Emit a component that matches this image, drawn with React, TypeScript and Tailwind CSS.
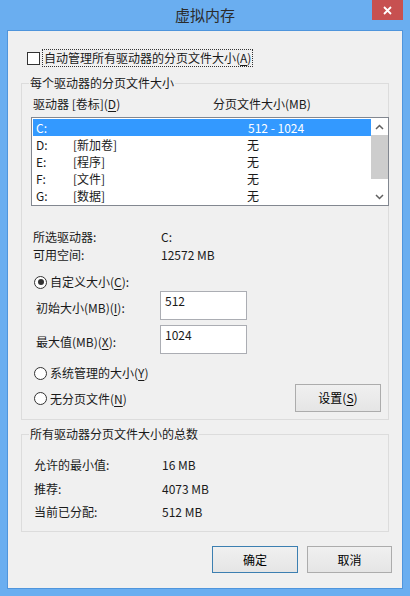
import React from "react";

const font = { fontFamily: '"Noto Sans CJK SC", "Noto Sans", sans-serif' };

const U = ({ c }: { c: string }) => <span className="underline underline-offset-2">{c}</span>;

const Radio = ({ checked }: { checked?: boolean }) => (
  <span className="flex h-[13px] w-[13px] shrink-0 items-center justify-center rounded-full border border-[#333] bg-white">
    {checked && <span className="h-[6px] w-[6px] rounded-full bg-[#333]" />}
  </span>
);

const Chevron = ({ up }: { up?: boolean }) => (
  <svg width="9" height="6" viewBox="0 0 9 6">
    <polyline
      points={up ? "1,5 4.5,1.5 8,5" : "1,1 4.5,4.5 8,1"}
      fill="none"
      stroke="#606060"
      strokeWidth="1.5"
    />
  </svg>
);

const Btn = ({ children, primary, className = "" }: { children: React.ReactNode; primary?: boolean; className?: string }) => (
  <button
    className={`flex items-center justify-center border bg-gradient-to-b from-[#f0f0f0] to-[#e5e5e5] text-[12px] text-black ${
      primary ? "border-[#3c7fb1]" : "border-[#acacac]"
    } ${className}`}
  >
    {children}
  </button>
);

const drives = [
  { d: "C:", label: "", size: "512 - 1024", selected: true },
  { d: "D:", label: "[新加卷]", size: "无" },
  { d: "E:", label: "[程序]", size: "无" },
  { d: "F:", label: "[文件]", size: "无" },
  { d: "G:", label: "[数据]", size: "无" },
];

export default function App() {
  return (
    <div className="h-[596px] w-[410px] bg-[#6aaef0] text-[12px] leading-[16px] text-[#1a1a1a]" style={font}>
      {/* title bar */}
      <div className="relative flex h-[30px] items-center justify-center">
        <span className="text-[15px] text-[#2b2b2b]">虚拟内存</span>
        <div className="absolute right-[7px] top-0 flex h-[20px] w-[31px] items-center justify-center bg-[#c75050]">
          <svg width="9" height="9" viewBox="0 0 9 9">
            <path d="M1 1 L8 8 M8 1 L1 8" stroke="white" strokeWidth="1.8" />
          </svg>
        </div>
      </div>

      {/* client area */}
      <div className="mx-[7px] flex h-[559px] flex-col border border-[#4f95dc] bg-[#f0f0f0]">
        <div className="ml-[19px] mt-[18px] flex items-center">
          <span className="h-[13px] w-[13px] border border-[#333] bg-white" />
          <span className="ml-[2px] flex h-[18px] items-center border border-dotted border-[#333] px-[1px]">
            自动管理所有驱动器的分页文件大小(<U c="A" />)
          </span>
        </div>

        {/* group 1 */}
        <div className="ml-[13px] mt-[16px] flex h-[337px] w-[368px] flex-col border border-[#dcdcdc]">
          <span className="ml-[7px] mt-[-9px] w-fit bg-[#f0f0f0] px-[1px]">每个驱动器的分页文件大小</span>
          <div className="mt-[5px] flex">
            <span className="ml-[11px] w-[180px]">
              驱动器 [卷标](<U c="D" />)
            </span>
            <span>分页文件大小(MB)</span>
          </div>

          <div className="ml-[9px] mt-[5px] flex h-[89px] w-[358px] border border-[#828790] bg-white">
            <div className="flex flex-1 flex-col pl-[1px] pt-[1px]">
              {drives.map((r) => (
                <div
                  key={r.d}
                  className={`flex h-[17px] items-center ${r.selected ? "bg-[#3399ff] text-white" : ""}`}
                >
                  <span className="ml-[3px] w-[37px]">{r.d}</span>
                  <span className="w-[174px]">{r.label}</span>
                  <span className={r.selected ? "ml-[1px]" : ""}>{r.size}</span>
                </div>
              ))}
            </div>
            <div className="flex w-[17px] flex-col items-center">
              <div className="flex h-[17px] items-center justify-center">
                <Chevron up />
              </div>
              <div className="h-[44px] w-[17px] bg-[#cdcdcd]" />
              <div className="flex-1" />
              <div className="flex h-[17px] items-center justify-center">
                <Chevron />
              </div>
            </div>
          </div>

          <div className="ml-[11px] mt-[23px] flex">
            <span className="w-[128px]">所选驱动器:</span>
            <span>C:</span>
          </div>
          <div className="ml-[11px] mt-[2px] flex">
            <span className="w-[128px]">可用空间:</span>
            <span>12572 MB</span>
          </div>

          <div className="ml-[12px] mt-[11px] flex items-center gap-[3px]">
            <Radio checked />
            <span>
              自定义大小(<U c="C" />):
            </span>
          </div>

          <div className="ml-[14px] mt-[1px] flex items-center">
            <span className="mt-[4px] w-[124px]">
              初始大小(MB)(<U c="I" />):
            </span>
            <div className="h-[29px] w-[87px] border border-[#abadb3] bg-white pl-[4px] pt-[1px]">512</div>
          </div>
          <div className="ml-[14px] mt-[5px] flex items-center">
            <span className="mt-[4px] w-[124px]">
              最大值(MB)(<U c="X" />):
            </span>
            <div className="h-[29px] w-[87px] border border-[#abadb3] bg-white pl-[4px] pt-[1px]">1024</div>
          </div>

          <div className="ml-[12px] mt-[11px] flex items-center gap-[3px]">
            <Radio />
            <span>
              系统管理的大小(<U c="Y" />)
            </span>
          </div>

          <div className="ml-[12px] mr-[7px] mt-[3px] flex h-[28px] items-center">
            <Radio />
            <span className="ml-[3px] mt-[2px]">
              无分页文件(<U c="N" />)
            </span>
            <Btn className="ml-auto h-[28px] w-[86px]">
              设置(<U c="S" />)
            </Btn>
          </div>
        </div>

        {/* group 2 */}
        <div className="ml-[13px] mt-[14px] flex h-[98px] w-[368px] flex-col border border-[#dcdcdc]">
          <span className="ml-[7px] mt-[-9px] w-fit bg-[#f0f0f0] px-[1px]">所有驱动器分页文件大小的总数</span>
          <div className="ml-[12px] mt-[15px] flex">
            <span className="w-[128px]">允许的最小值:</span>
            <span>16 MB</span>
          </div>
          <div className="ml-[12px] mt-[8px] flex">
            <span className="w-[128px]">推荐:</span>
            <span>4073 MB</span>
          </div>
          <div className="ml-[12px] mt-[7px] flex">
            <span className="w-[128px]">当前已分配:</span>
            <span>512 MB</span>
          </div>
        </div>

        <div className="mr-[10px] mt-[14px] flex justify-end gap-[9px]">
          <Btn primary className="h-[27px] w-[86px]">
            确定
          </Btn>
          <Btn className="h-[27px] w-[85px]">取消</Btn>
        </div>
      </div>
    </div>
  );
}
